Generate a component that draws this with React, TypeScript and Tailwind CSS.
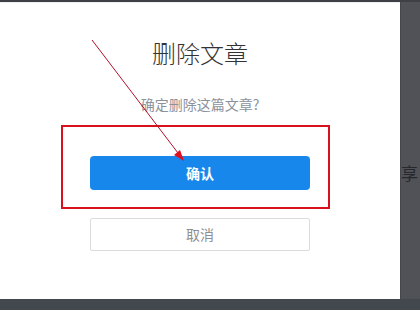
import React from "react";

const font = { fontFamily: '"Noto Sans CJK SC", "Noto Sans", sans-serif' };

function Annotation() {
  // red highlight box + arrow drawn over the dialog
  return (
    <>
      <div className="pointer-events-none absolute left-[61px] top-[125px] h-[84px] w-[269px] border-2 border-[#d8111d]" />
      <svg
        className="pointer-events-none absolute left-0 top-0"
        width="420"
        height="310"
        viewBox="0 0 420 310"
      >
        <line x1="92" y1="40" x2="178" y2="153" stroke="#b3112a" strokeWidth="1" />
        <polygon points="184,161 174,155 180,150" fill="#e0101c" />
      </svg>
    </>
  );
}

export default function App() {
  return (
    <div className="relative flex h-[310px] w-[420px] flex-col overflow-hidden bg-[#505257]" style={font}>
      <div className="h-[2px] bg-[#3e4045]" />
      <div className="flex h-[297px]">
        <div className="flex w-[400px] flex-col items-center border-t border-[#eeeeee] bg-white">
          <h1 className="mt-[34px] text-[24px] leading-[32px] font-light text-[#333333]">删除文章</h1>
          <p className="mt-[25px] text-[14px] leading-[20px] text-[#8c919b]">确定删除这篇文章?</p>
          <button className="mt-[42px] flex h-[34px] w-[220px] items-center justify-center rounded-[4px] bg-[#1787ec] text-[14px] font-bold text-white">
            确认
          </button>
          <button className="mt-[28px] flex h-[33px] w-[220px] items-center justify-center rounded-[2px] border border-[#dcdcdc] bg-white text-[14px] text-[#8f8f8f]">
            取消
          </button>
        </div>
        <div className="flex flex-1 flex-col border-l border-[#45474c]">
          <span className="mt-[161px] text-[17px] leading-[20px] text-[#26282c]">享</span>
        </div>
      </div>
      <div className="flex-1 bg-[#43474e]" />
      <Annotation />
    </div>
  );
}
